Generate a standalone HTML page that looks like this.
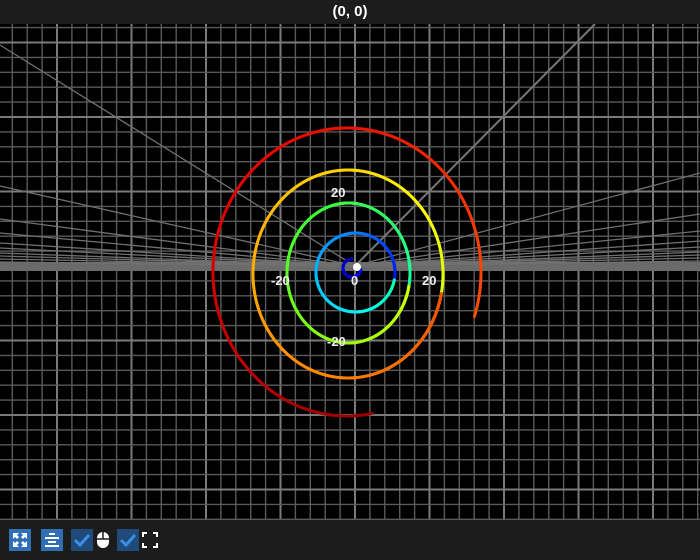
<!DOCTYPE html>
<html><head><meta charset="utf-8"><style>
html,body{margin:0;padding:0;background:#000;width:700px;height:560px;overflow:hidden;font-family:"Liberation Sans",sans-serif}
#top{position:absolute;left:0;top:0;width:700px;height:24px;background:#1c1c1c;color:#fff;font-size:15px;font-weight:bold;text-align:center;line-height:24px}
#bot{position:absolute;left:0;top:520px;width:700px;height:40px;background:#1c1c1c}
.b{position:absolute;top:9px;width:22px;height:22px;background:#2f6fb5}
.c{background:#1f4a7a}
svg{position:absolute;left:0;top:24px}
</style></head><body>
<div id="top">(0, 0)</div>
<svg id="s" width="700" height="496" viewBox="0 24 700 496"></svg>
<div id="bot">
<div class="b" style="left:9px"><svg width="22" height="22" style="position:static"><g fill="#fff"><path d="M4 4h6l-2 2 2 2-2 2-2-2-2 2z"/><path d="M18 4v6l-2-2-2 2-2-2 2-2-2-2z"/><path d="M4 18v-6l2 2 2-2 2 2-2 2 2 2z"/><path d="M18 18h-6l2-2-2-2 2-2 2 2 2-2z"/></g></svg></div>
<div class="b" style="left:41px"><svg width="22" height="22" style="position:static"><g fill="#fff"><rect x="8" y="4" width="6" height="2"/><rect x="4" y="8" width="14" height="2"/><rect x="7" y="12" width="8" height="2"/><rect x="4" y="16" width="14" height="2"/></g></svg></div>
<div class="b c" style="left:71px"><svg width="22" height="22" style="position:static"><path d="M4 11l5 5 9-10" stroke="#3c8fe6" stroke-width="3" fill="none"/></svg></div>
<svg width="14" height="20" style="left:96px;top:10px;position:absolute"><rect x="1" y="2" width="12" height="16" rx="6" fill="#fff"/><line x1="7" y1="2" x2="7" y2="9" stroke="#1c1c1c" stroke-width="1.5"/><line x1="1" y1="9" x2="13" y2="9" stroke="#1c1c1c" stroke-width="1.5"/></svg>
<div class="b c" style="left:117px"><svg width="22" height="22" style="position:static"><path d="M4 11l5 5 9-10" stroke="#3c8fe6" stroke-width="3" fill="none"/></svg></div>
<svg width="16" height="16" style="left:142px;top:12px;position:absolute"><path d="M1 5V1h4M11 1h4v4M15 11v4h-4M5 15H1v-4" stroke="#fff" stroke-width="2" fill="none"/></svg>
</div>
<script>
var s=document.getElementById('s'),h='';
var cx=355,cy=266,sp=14.9;
for(var k=-24;k<=24;k++){var x=cx+k*sp;if(x<0||x>700)continue;var m=k%5==0;
h+='<line x1="'+x+'" y1="24" x2="'+x+'" y2="520" stroke="'+(m?'#7a7a7a':'#5a5a5a')+'" stroke-width="'+(m?2:1.4)+'"/>';}
for(var k=-20;k<=20;k++){var y=cy+k*sp;if(y<24||y>520)continue;var m=k%5==0;
h+='<line x1="0" y1="'+y+'" x2="700" y2="'+y+'" stroke="'+(m?'#7a7a7a':'#5a5a5a')+'" stroke-width="'+(m?2:1.4)+'"/>';}
h+='<rect x="0" y="262" width="700" height="9" fill="#6a6a6a"/>';
var L=[45,186,219,233,243,248,253,256,259,262],R=[173,214,231,241,247,252,255,258,261];
L.forEach(function(y){h+='<line x1="'+cx+'" y1="'+cy+'" x2="0" y2="'+y+'" stroke="#707070" stroke-width="1.3"/>';});
R.forEach(function(y){h+='<line x1="'+cx+'" y1="'+cy+'" x2="700" y2="'+y+'" stroke="#707070" stroke-width="1.3"/>';});
h+='<line x1="'+cx+'" y1="'+cy+'" x2="595" y2="24" stroke="#777" stroke-width="2"/>';
function interp(P,t){for(var i=1;i<P.length;i++){if(t<=P[i][0]){var a=P[i-1],b=P[i];var f=(t-a[0])/(b[0]-a[0]);return a[1]+f*(b[1]-a[1]);}}return P[P.length-1][1];}
var E=[[352,268,9,9],[355.5,272.5,39.5,39.5],[348.5,273,61.5,70],[348,274,95,104],[347,272,134,144]];
var HP=[[0,240],[0.7,238],[1,212],[1.5,182],[2,125],[2.5,85],[3,50],[3.5,30],[4,4],[4.2,0]];
var LP=[[0,35],[0.7,45],[1,52],[1.5,48],[2,62],[2.5,52],[3,50],[3.5,50],[4,47],[4.25,42],[4.53,30]];
for(var k=0;k<5;k++){var t0=k==0?0:(k==4?3.7:k-0.45),t1=k==4?4.53:k+0.72;var p=E[k],px,py,n=Math.round((t1-t0)*300);
for(var i=0;i<=n;i++){var t=t0+(t1-t0)*i/n;var a=Math.PI/2+t*2*Math.PI;var x=p[0]+p[2]*Math.cos(a),y=p[1]-p[3]*Math.sin(a);
var hue=interp(HP,t),l=interp(LP,t);
if(i>0)h+='<line x1="'+px+'" y1="'+py+'" x2="'+x+'" y2="'+y+'" stroke="hsl('+hue+',100%,'+l+'%)" stroke-width="3" stroke-linecap="round"/>';px=x;py=y;}}
function tx(x,y,t){h+='<text x="'+x+'" y="'+y+'" fill="#eee" font-size="13" font-weight="bold" font-family="Liberation Sans,sans-serif">'+t+'</text>';}
tx(331,197,'20');tx(271,285,'-20');tx(422,285,'20');tx(327,346,'-20');tx(351,285,'0');
h+='<circle cx="357" cy="267" r="4" fill="#fff"/>';
s.innerHTML=h;
</script>
</body></html>
